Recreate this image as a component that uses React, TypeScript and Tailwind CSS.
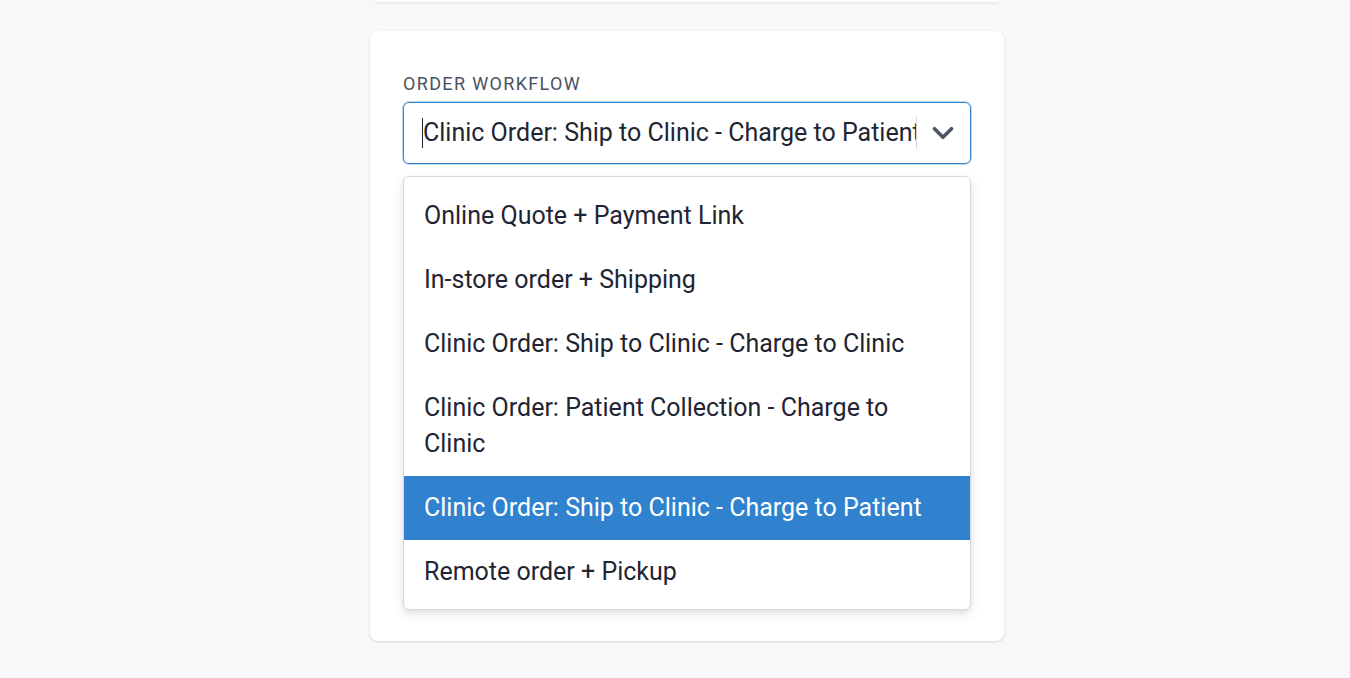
import { ChevronDown } from "lucide-react";

const options = [
  "Online Quote + Payment Link",
  "In-store order + Shipping",
  "Clinic Order: Ship to Clinic - Charge to Clinic",
  "Clinic Order: Patient Collection - Charge to Clinic",
  "Clinic Order: Ship to Clinic - Charge to Patient",
  "Remote order + Pickup",
];

const selected = "Clinic Order: Ship to Clinic - Charge to Patient";

export default function App() {
  return (
    <div className="min-h-[678px] bg-[#f7f8fa] font-['Roboto',sans-serif] text-[#1f2532]">
      <div className="flex flex-col items-center pl-[24px]">
        <div className="h-[2px] w-[624px] rounded-b-lg bg-white shadow-[0_1px_3px_rgba(0,0,0,0.12)]" />

        <div className="mt-[29px] w-[634px] rounded-lg bg-white px-[33px] pb-[31px] pt-[41px] shadow-[0_1px_3px_rgba(0,0,0,0.1),0_1px_2px_rgba(0,0,0,0.06)]">
          <label className="block text-[18px] leading-6 uppercase tracking-[0.075em] text-[#4a5262]">Order workflow</label>

          <div className="mt-[6px] flex h-[62px] w-[568px] items-center rounded-md border border-[#3182ce] pl-[18px] pr-[10px] shadow-[0_0_0_1px_rgba(49,130,206,0.3)]">
            <div className="flex min-w-0 flex-1 items-center overflow-hidden">
              <span className="h-[30px] w-px shrink-0 bg-[#1f2532]" />
              <span className="whitespace-nowrap text-[25px] leading-9">{selected}</span>
            </div>
            <span className="h-[32px] w-px shrink-0 bg-[#d4d7dd]" />
            <ChevronDown className="ml-[9px] h-[34px] w-[34px] shrink-0 text-[#4f5665]" strokeWidth={2.6} />
          </div>

          <ul className="mt-[12px] w-[568px] rounded-md border border-[#d6d9de] bg-white pb-[5px] pt-[7px] shadow-[0_4px_12px_rgba(0,0,0,0.1),0_2px_4px_rgba(0,0,0,0.05)]">
            {options.map((o) => (
              <li
                key={o}
                className={
                  o === selected
                    ? "bg-[#3182ce] px-5 py-[14px] text-[25px] leading-9 text-white"
                    : "px-5 py-[14px] text-[25px] leading-9"
                }
              >
                {o}
              </li>
            ))}
          </ul>
        </div>
      </div>
    </div>
  );
}
